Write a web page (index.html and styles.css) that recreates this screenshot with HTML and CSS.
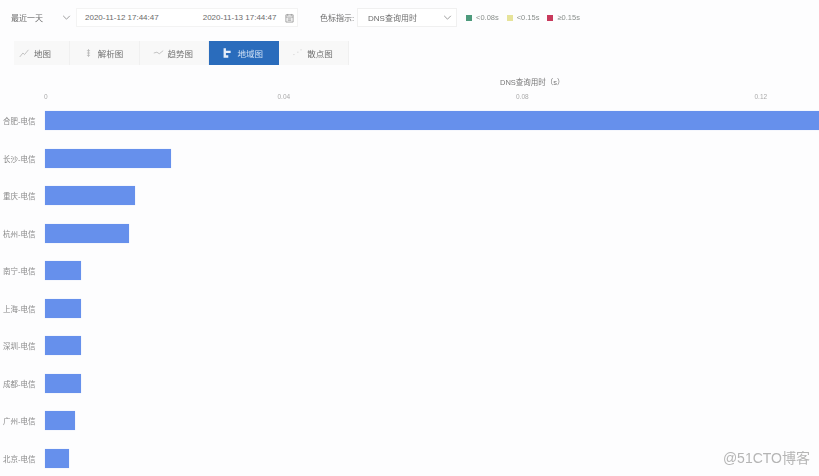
FILE: index.html
```html
<!DOCTYPE html>
<html lang="zh-CN">
<head>
    <meta charset="UTF-8">
    <title>DNS查询用时</title>
    <link rel="stylesheet" href="styles.css">
</head>
<body>
    <div class="screen">
        <div class="toolbar">
            <div class="select range-select">
                <span>最近一天</span>
                <svg class="chevron" viewBox="0 0 10 6"><path d="M1 1l4 4 4-4"/></svg>
            </div>
            <div class="date-range">
                <span>2020-11-12 17:44:47</span>
                <span class="date-end">2020-11-13 17:44:47</span>
                <svg class="calendar" viewBox="0 0 10 11"><path d="M1 2h8v8H1zM1 4.5h8M3 1v2M7 1v2M3 6.500h4M3 8h4"/></svg>
            </div>
            <span class="color-label">色标指示:</span>
            <div class="select metric-select">
                <span>DNS查询用时</span>
                <svg class="chevron" viewBox="0 0 10 6"><path d="M1 1l4 4 4-4"/></svg>
            </div>
            <div class="legend">
                <span class="legend-item"><i class="swatch swatch-green"></i>&lt;0.08s</span>
                <span class="legend-item"><i class="swatch swatch-yellow"></i>&lt;0.15s</span>
                <span class="legend-item"><i class="swatch swatch-red"></i>≥0.15s</span>
            </div>
        </div>

        <div class="tabs">
            <div class="tab tab-first">
                <svg class="tab-icon" viewBox="0 0 14 12"><path d="M1 11l4-5 2 2 5-6"/></svg>
                地图
            </div>
            <div class="tab">
                <svg class="tab-icon" viewBox="0 0 14 12"><path d="M7 1v10M5 3h4M5 6h4M5 9h4"/></svg>
                解析图
            </div>
            <div class="tab">
                <svg class="tab-icon" viewBox="0 0 14 12"><path d="M1 6l4-1 3 2 5-4"/></svg>
                趋势图
            </div>
            <div class="tab tab-active">
                <svg class="tab-icon" viewBox="0 0 14 12"><path class="solid" d="M2 0h3v3h6v3H5v3h3v3H2z"/></svg>
                地域图
            </div>
            <div class="tab">
                <svg class="tab-icon" viewBox="0 0 14 12"><path d="M2 8h1M7 5h1M11 2h1"/></svg>
                散点图
            </div>
        </div>

        <div class="chart">
            <div class="axis-title">DNS查询用时（s）</div>
            <div class="axis">
                <span>0</span>
                <span>0.04</span>
                <span>0.08</span>
                <span>0.12</span>
            </div>
            <div class="plot">
                <div class="row"><span class="city">合肥-电信</span><div class="bar" style="width: 774px"></div></div>
                <div class="row"><span class="city">长沙-电信</span><div class="bar" style="width: 126px"></div></div>
                <div class="row"><span class="city">重庆-电信</span><div class="bar" style="width: 90px"></div></div>
                <div class="row"><span class="city">杭州-电信</span><div class="bar" style="width: 84px"></div></div>
                <div class="row"><span class="city">南宁-电信</span><div class="bar" style="width: 36px"></div></div>
                <div class="row"><span class="city">上海-电信</span><div class="bar" style="width: 36px"></div></div>
                <div class="row"><span class="city">深圳-电信</span><div class="bar" style="width: 36px"></div></div>
                <div class="row"><span class="city">成都-电信</span><div class="bar" style="width: 36px"></div></div>
                <div class="row"><span class="city">广州-电信</span><div class="bar" style="width: 30px"></div></div>
                <div class="row"><span class="city">北京-电信</span><div class="bar" style="width: 24px"></div></div>
            </div>
        </div>
    </div>

    <div class="watermark">@51CTO博客</div>
</body>
</html>
```

FILE: styles.css
```css
* {
    box-sizing: border-box;
    margin: 0;
    padding: 0;
}

body {
    position: relative;
    width: 819px;
    height: 476px;
    overflow: hidden;
    background-color: #fdfdfe;
    color: #6b6b6b;
    font-family: "Liberation Sans", "Noto Sans CJK SC", sans-serif;
    font-size: 8px;
}

/* the reference is a soft video frame */
.screen {
    height: 476px;
    overflow: hidden;
    padding-top: 8px;
    filter: blur(0.7px);
}

svg {
    fill: none;
    stroke: currentColor;
    stroke-width: 1;
}

.toolbar {
    display: flex;
    align-items: center;
    height: 19px;
    padding-left: 11px;
}

.select {
    display: flex;
    align-items: center;
    justify-content: space-between;
    height: 19px;
}

.range-select {
    width: 60px;
    margin-right: 5px;
}

.metric-select {
    width: 100px;
    margin-right: 9px;
    padding: 0 4px 0 10px;
    border: 1px solid #f0f0f0;
    background-color: #fff;
}

.chevron {
    width: 9px;
    height: 5px;
    color: #8a8a8a;
}

.date-range {
    display: flex;
    align-items: center;
    width: 222px;
    height: 19px;
    padding: 0 3px 0 8px;
    border: 1px solid #f3f3f3;
    background-color: #fff;
}

.date-end {
    margin-left: 44px;
}

.calendar {
    width: 9px;
    height: 10px;
    margin-left: auto;
    color: #9a9a9a;
}

.color-label {
    margin-left: 22px;
    margin-right: 5px;
    width: 32px;
    white-space: nowrap;
}

.legend {
    display: flex;
    gap: 8px;
    font-size: 7.500px;
    color: #8a8f8c;
}

.legend-item {
    display: flex;
    align-items: center;
    gap: 4px;
}

.swatch {
    width: 6px;
    height: 6px;
}

.swatch-green {
    background-color: #4d9a7c;
}

.swatch-yellow {
    background-color: #e6e39a;
}

.swatch-red {
    background-color: #c8395c;
}

.tabs {
    display: flex;
    width: 335px;
    height: 24px;
    margin: 14px 0 0 14px;
    background-color: #f8f8f8;
}

.tab {
    display: flex;
    align-items: center;
    gap: 4px;
    width: 70px;
    padding-left: 13px;
    border-right: 1px solid #f0f0f0;
    font-size: 8.500px;
    color: #6f6f6f;
}

.tab-first {
    width: 56px;
    padding-left: 5px;
}

.tab-icon {
    width: 11px;
    height: 10px;
    color: #b5b5b5;
}

.tab-active {
    background-color: #2a6cbc;
    border-right: none;
    color: #cfe0f5;
}

.tab-active .tab-icon {
    color: #cfe0f5;
}

.tab-active .solid {
    fill: #e6eef9;
    stroke: none;
}

.chart {
    margin-top: 13px;
}

.axis-title {
    height: 10px;
    padding-left: 500px;
    line-height: 10px;
    font-size: 7.500px;
    color: #777;
}

.axis {
    display: grid;
    grid-template-columns: repeat(3, 238.500px) 1fr;
    height: 10px;
    margin-top: 4px;
    padding-left: 45px;
    font-size: 6.500px;
    line-height: 10px;
    color: #aaa;
}

.axis span {
    transform: translateX(-1px);
}

.axis span + span {
    transform: translateX(-6px);
}

.row {
    display: flex;
    align-items: center;
    height: 37.500px;
}

.city {
    width: 45px;
    padding-left: 3px;
    font-size: 7.500px;
    color: #8a8a8a;
    white-space: nowrap;
}

.bar {
    height: 19px;
    background-color: #6690ec;
    box-shadow: 0 0 1px #cfdcf8;
}

.watermark {
    position: absolute;
    right: 9px;
    bottom: 9px;
    font-size: 14px;
    color: #b5b5b5;
}
```
